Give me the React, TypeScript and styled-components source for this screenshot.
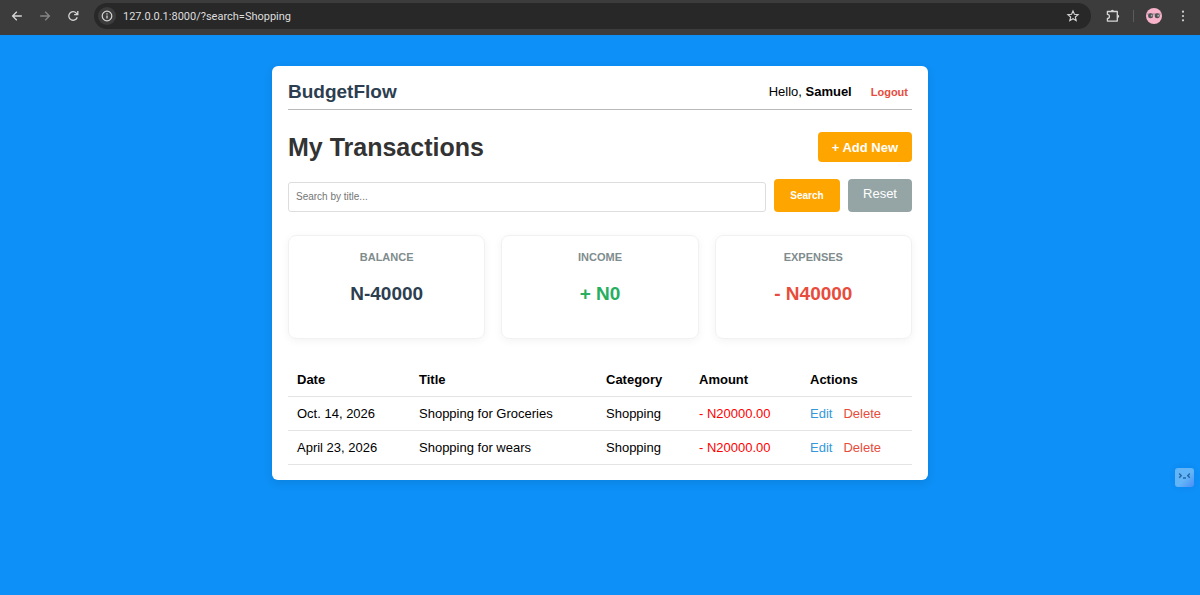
import React from "react";
import styled, { createGlobalStyle } from "styled-components";

const GlobalStyle = createGlobalStyle`
  * { box-sizing: border-box; }
  body {
    margin: 0;
    background: #0d90f7;
    color: #000;
    font: 13px/16px "Liberation Sans", Arial, sans-serif;
  }
  button, input { font-family: inherit; }
  a { text-decoration: none; }
`;

const BrowserBar = styled.header`
  display: flex;
  align-items: center;
  height: 35px;
  padding: 0 8px 3px;
  background: #3c3c3c;
  color: #d6d6d6;
`;

const IconButton = styled.button<{ $dim?: boolean }>`
  display: flex;
  align-items: center;
  justify-content: center;
  flex: none;
  width: 18px;
  height: 18px;
  padding: 0;
  border: 0;
  background: none;
  color: ${(p) => (p.$dim ? "#868686" : "#d6d6d6")};
`;

const NavButtons = styled.nav`
  display: flex;
  gap: 10px;
  margin-right: 12px;
`;

const Omnibox = styled.div`
  display: flex;
  flex: 1;
  align-items: center;
  height: 26px;
  padding: 0 9px 0 4px;
  border-radius: 13px;
  background: #282828;
`;

const SiteInfo = styled(IconButton)`
  border-radius: 50%;
  background: #3c3c3c;
`;

const Address = styled.input`
  flex: 1;
  min-width: 0;
  margin: 0 8px 0 7px;
  padding: 2px 0 0;
  border: 0;
  outline: 0;
  background: none;
  color: #dedede;
  && { font: 11px/16px Roboto, sans-serif; }
`;

const BarActions = styled.div`
  display: flex;
  align-items: center;
  gap: 11px;
  margin-left: 13px;
`;

const Divider = styled.span`
  width: 1px;
  height: 12px;
  background: #5c5c5c;
`;

const Card = styled.main`
  width: calc(100% - 32px);
  max-width: 656px;
  margin: 31px auto;
  padding: 16px 16px 15px;
  border-radius: 6px;
  background: #fff;
  box-shadow: 0 3px 10px rgba(0, 0, 0, 0.1);
`;

const CardHeader = styled.div`
  display: flex;
  align-items: center;
  justify-content: space-between;
  height: 28px;
  padding-bottom: 8px;
  border-bottom: 1px solid #b8b8b8;
`;

const Brand = styled.h2`
  margin: 0;
  color: #2c3e50;
  font-size: 19px;
  line-height: 20px;
`;

const Account = styled.div`
  display: flex;
  align-items: center;
  gap: 19px;
  padding-right: 4px;
`;

const LogoutButton = styled.button`
  padding: 0;
  border: 0;
  background: none;
  color: #e74c3c;
  font-size: 11px;
  font-weight: bold;
  line-height: 16px;
`;

const TitleRow = styled.div`
  display: flex;
  align-items: center;
  justify-content: space-between;
  margin: 22px 0 17px;
`;

const Title = styled.h1`
  margin: 0;
  color: #333;
  font-size: 25px;
  line-height: 30px;
`;

const AddLink = styled.a`
  padding: 8px 14px 6px;
  border-radius: 4px;
  background: #ffa500;
  color: #fff;
  font-weight: bold;
`;

const SearchForm = styled.form`
  display: flex;
  align-items: flex-end;
  gap: 8px;
`;

const SearchInput = styled.input`
  flex: 1;
  min-width: 0;
  height: 30px;
  padding: 0 7px 2px;
  border: 1px solid #ddd;
  border-radius: 3px;
  background: #fff;
  font-size: 10px;
  &::placeholder { color: #757575; }
`;

const SearchButton = styled.button`
  width: 66px;
  height: 33px;
  border: 0;
  border-radius: 4px;
  background: #ffa500;
  color: #fff;
  font-size: 10px;
  font-weight: bold;
`;

const ResetLink = styled.a`
  width: 64px;
  height: 33px;
  padding-top: 7px;
  border-radius: 4px;
  background: #95a5a6;
  color: #fff;
  text-align: center;
`;

const Summary = styled.section`
  display: grid;
  grid-template-columns: repeat(3, 1fr);
  gap: 16px;
  margin: 23px 0;
`;

const SummaryCard = styled.div`
  padding: 14px 16px 32px;
  border: 1px solid #f1f1f1;
  border-radius: 8px;
  text-align: center;
  box-shadow: 0 2px 8px rgba(0, 0, 0, 0.05);
`;

const SummaryLabel = styled.h3`
  margin: 0 0 18px;
  color: #7f8c8d;
  font-size: 11px;
  line-height: 14px;
  text-transform: uppercase;
`;

const SummaryValue = styled.p<{ $color: string }>`
  margin: 0;
  color: ${(p) => p.$color};
  font-size: 19px;
  font-weight: bold;
  line-height: 24px;
`;

const Table = styled.table`
  width: 100%;
  border-collapse: collapse;
  text-align: left;
`;

const Column = styled.col<{ $width?: number }>`
  width: ${(p) => (p.$width ? `${p.$width}px` : "auto")};
`;

const cell = `
  height: 34px;
  padding: 2px 9px 0;
  border-bottom: 1px solid #e4e4e4;
`;

const HeadCell = styled.th`${cell}`;
const Cell = styled.td<{ $color?: string }>`
  ${cell}
  color: ${(p) => p.$color ?? "inherit"};
`;

const ActionLink = styled.a<{ $color: string }>`
  margin-right: 11px;
  color: ${(p) => p.$color};
`;

const Assistant = styled.button`
  position: fixed;
  right: 6px;
  bottom: 108px;
  display: flex;
  width: 19px;
  height: 19px;
  padding: 0;
  border: 0;
  border-radius: 3px;
  background: linear-gradient(135deg, #63b5f7 55%, #4a8cf8);
  box-shadow: 0 0 6px rgba(0, 60, 160, 0.12);
`;

const stats = [
  { label: "Balance", value: "N-40000", color: "#2c3e50" },
  { label: "Income", value: "+ N0", color: "#27ae60" },
  { label: "Expenses", value: "- N40000", color: "#e74c3c" },
];

const columns: { name: string; width?: number }[] = [
  { name: "Date", width: 122 },
  { name: "Title", width: 187 },
  { name: "Category", width: 93 },
  { name: "Amount", width: 111 },
  { name: "Actions" },
];

const rows = [
  { date: "Oct. 14, 2026", title: "Shopping for Groceries", category: "Shopping", amount: "- N20000.00" },
  { date: "April 23, 2026", title: "Shopping for wears", category: "Shopping", amount: "- N20000.00" },
];

const Icon = ({ size = 14, children }: { size?: number; children: React.ReactNode }) => (
  <svg width={size} height={size} viewBox="0 0 14 14" fill="none" stroke="currentColor" strokeWidth="1.3" aria-hidden="true">
    {children}
  </svg>
);

const BrowserChrome = () => (
  <BrowserBar>
    <NavButtons aria-label="Browser">
      <IconButton aria-label="Back"><Icon><path d="M11.8 7H2.8M6.8 2.8L2.6 7l4.2 4.2" /></Icon></IconButton>
      <IconButton aria-label="Forward" $dim><Icon><path d="M2.2 7h9M7.2 2.8L11.4 7l-4.2 4.2" /></Icon></IconButton>
      <IconButton aria-label="Reload">
        <Icon><path d="M11.2 8.2A4.3 4.3 0 1 1 10.3 4.1L11.4 5.3M11.8 2v3.7H8.2" /></Icon>
      </IconButton>
    </NavButtons>
    <Omnibox>
      <SiteInfo aria-label="Site information">
        <Icon><circle cx="7" cy="7" r="4.8" strokeWidth="1.2" /><path d="M7 6.4v3.2M7 4.2v1.3" /></Icon>
      </SiteInfo>
      <Address aria-label="Address" defaultValue="127.0.0.1:8000/?search=Shopping" />
      <IconButton aria-label="Bookmark">
        <Icon><path strokeWidth="1.1" d="M7 1.9l1.4 3.4 3.7.3-2.8 2.4.9 3.6L7 9.7l-3.2 1.9.9-3.6-2.8-2.4 3.7-.3z" /></Icon>
      </IconButton>
    </Omnibox>
    <BarActions>
      <IconButton aria-label="Extensions">
        <Icon>
          <path strokeLinejoin="round" d="M1.4 2.5h9.9v9.6H1.4V9.4a2 2 0 0 0 0-4z" />
          <path fill="currentColor" stroke="none" d="M4.9 2.2a1.5 1.5 0 0 1 3 0zM11.7 5.8a1.5 1.5 0 0 1 0 3z" />
        </Icon>
      </IconButton>
      <Divider />
      <IconButton aria-label="Profile">
        <svg width="16" height="16" viewBox="0 0 16 16" aria-hidden="true">
          <circle cx="8" cy="8" r="8" fill="#f8b3cb" />
          <path d="M1.2 6h13.6" stroke="#77686f" strokeWidth=".7" />
          <circle cx="4.6" cy="7.8" r="2.5" fill="#4f5254" />
          <circle cx="11.2" cy="7.8" r="2.5" fill="#4f5254" />
          <path d="M4.8 6.8h1.6v1.8H4.8zM11.4 6.8H13v1.8h-1.6z" fill="#a9b2b4" />
        </svg>
      </IconButton>
      <IconButton aria-label="Menu">
        <Icon><g fill="currentColor" stroke="none"><circle cx="7" cy="2.7" r="1.1" /><circle cx="7" cy="7" r="1.1" /><circle cx="7" cy="11.3" r="1.1" /></g></Icon>
      </IconButton>
    </BarActions>
  </BrowserBar>
);

export default function App() {
  return (
    <>
      <GlobalStyle />
      <BrowserChrome />
      <Card>
        <CardHeader>
          <Brand>BudgetFlow</Brand>
          <Account>
            <span>Hello, <strong>Samuel</strong></span>
            <LogoutButton>Logout</LogoutButton>
          </Account>
        </CardHeader>
        <TitleRow>
          <Title>My Transactions</Title>
          <AddLink href="#add">+ Add New</AddLink>
        </TitleRow>
        <SearchForm onSubmit={(e) => e.preventDefault()}>
          <SearchInput type="text" aria-label="Search by title" placeholder="Search by title..." />
          <SearchButton type="submit">Search</SearchButton>
          <ResetLink href="#reset">Reset</ResetLink>
        </SearchForm>
        <Summary>
          {stats.map((s) => (
            <SummaryCard key={s.label}>
              <SummaryLabel>{s.label}</SummaryLabel>
              <SummaryValue $color={s.color}>{s.value}</SummaryValue>
            </SummaryCard>
          ))}
        </Summary>
        <Table>
          <colgroup>
            {columns.map((c) => (
              <Column key={c.name} $width={c.width} />
            ))}
          </colgroup>
          <thead>
            <tr>
              {columns.map((c) => (
                <HeadCell key={c.name} scope="col">{c.name}</HeadCell>
              ))}
            </tr>
          </thead>
          <tbody>
            {rows.map((r) => (
              <tr key={r.date}>
                <Cell>{r.date}</Cell>
                <Cell>{r.title}</Cell>
                <Cell>{r.category}</Cell>
                <Cell $color="#ff0000">{r.amount}</Cell>
                <Cell>
                  <ActionLink href="#edit" $color="#3498db">Edit</ActionLink>
                  <ActionLink href="#delete" $color="#e74c3c">Delete</ActionLink>
                </Cell>
              </tr>
            ))}
          </tbody>
        </Table>
      </Card>
      <Assistant aria-label="Assistant">
        <svg width="19" height="19" viewBox="0 0 19 19" fill="none" stroke="#2467a8" strokeWidth="1.5" aria-hidden="true">
          <path d="M4.2 5.6l2 2.1-2 2.1M14.8 5.6l-2 2.1 2 2.1M8 10h3" />
        </svg>
      </Assistant>
    </>
  );
}
